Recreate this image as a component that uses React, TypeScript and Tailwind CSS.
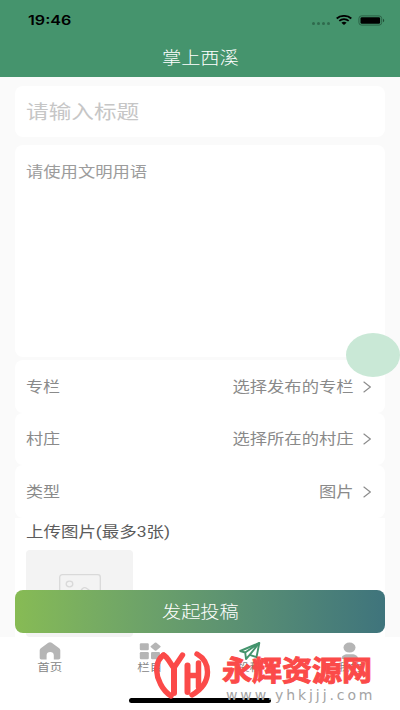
import type { ReactNode } from "react";

const cjk = "font-['Roboto','Noto_Sans_CJK_SC',sans-serif]";

const rows = [
  { label: "专栏", value: "选择发布的专栏" },
  { label: "村庄", value: "选择所在的村庄" },
  { label: "类型", value: "图片" }
];

function StatusBar() {
  return (
    <div className="flex h-10 items-center justify-between pl-7 pr-[15px] text-black">
      <span className="mt-px origin-left scale-x-[1.24] font-['Inter',sans-serif] text-[13px] font-semibold leading-none">19:46</span>
      <div className="flex items-center">
        <div className="mr-[6px] mt-[7px] flex gap-[2px]">
          {[0, 1, 2, 3].map((i) => (
            <i key={i} className="h-[2.5px] w-[3px] rounded-full bg-[#2f6a4d]" />
          ))}
        </div>
        <svg className="mr-[6px] h-[10px] w-4" viewBox="0 0 16 10" fill="none" stroke="black" strokeWidth="1.8">
          <path d="M.7 3.5C4.8 0 11.2 0 15.3 3.5" />
          <path d="M3.3 5.9C6 3.7 10 3.7 12.7 5.9" />
          <path d="M8 10 5.4 7.7C6.8 6.5 9.2 6.5 10.6 7.7Z" fill="black" stroke="none" />
        </svg>
        <svg className="h-[11px] w-[27px]" viewBox="0 0 27 11" fill="none">
          <rect x=".9" y=".9" width="22.8" height="9.2" rx="2.6" stroke="#2b6246" />
          <rect x="2.5" y="2.3" width="19.6" height="6.5" rx="1.3" fill="black" />
          <path d="M25 3.8c1.6.6 1.6 2.8 0 3.4z" fill="#1f4a34" />
        </svg>
      </div>
    </div>
  );
}

function Chevron() {
  return (
    <svg className="mt-px h-3 w-2" viewBox="0 0 8 12" fill="none" stroke="#8c8c8c" strokeWidth="1.1">
      <path d="M.6.8 7.3 6 .6 11.2" />
    </svg>
  );
}

function Tab({ label, children }: { label: string; children: ReactNode }) {
  return (
    <div className="flex w-[100px] flex-col items-center">
      <div className="flex h-[19px] items-center justify-center">{children}</div>
      <span className="mt-px scale-x-[1.17] text-[10.7px] leading-[13px] text-[#868686]">{label}</span>
    </div>
  );
}

function TabBar() {
  return (
    <nav className="flex h-[73px] bg-white pt-1">
      <Tab label="首页">
        <svg className="h-[18px] w-[22px]" viewBox="0 0 22 18" fill="#b5b5b5">
          <path d="M9.3.8c1-.8 2.4-.8 3.4 0l7.5 5.4c.7.5 1.1 1.2 1.1 2v7.6c0 1-.7 1.7-1.8 1.7h-4.7v-4.3c0-2-1.5-3.2-3.6-3.2s-3.6 1.2-3.6 3.2v4.3H2.4c-1 0-1.7-.7-1.7-1.7V8.2c0-.8.4-1.5 1.1-2z" />
        </svg>
      </Tab>
      <Tab label="栏目">
        <svg className="h-[18px] w-[22px]" viewBox="0 0 22 18" fill="#b5b5b5">
          <rect x=".8" y="1.3" width="9" height="7" rx="1.2" />
          <rect x=".8" y="10" width="9" height="7.2" rx="1.2" />
          <rect x="12" y="10" width="9" height="7.2" rx="1.2" />
          <path d="m15.8.7-3.9 3.2q-.8.7 0 1.4l3.9 3.2q.8.6 1.6 0l3.9-3.2q.8-.7 0-1.4L17.400.7q-.8-.6-1.6 0Z" />
        </svg>
      </Tab>
      <Tab label="投稿">
        <svg className="h-[18px] w-[22px]" viewBox="0 0 22 18" fill="none" stroke="#43946d" strokeWidth="1.9" strokeLinejoin="round">
          <path d="M20.300 1 1.200 9l5 1.500.8 6.500 3.700-4.200 6.800 2.400z" />
          <path d="M20.300 1 6.200 10.500M20.300 1l-9.600 11.800" />
        </svg>
      </Tab>
      <Tab label="我的">
        <svg className="h-[18px] w-[22px]" viewBox="0 0 22 18" fill="#b5b5b5">
          <ellipse cx="10.5" cy="5.6" rx="6" ry="5" />
          <path d="M2.500 17c0-3.200 2.700-4.700 6-4.700h4.500c3.300 0 6 1.500 6 4.700z" />
        </svg>
      </Tab>
    </nav>
  );
}

function Watermark() {
  return (
    <div className="absolute left-[154px] top-[649px] flex">
      <svg className="h-[51px] w-[58px]" viewBox="0 0 58 51" fill="none" stroke="#fb4a49" strokeWidth="5.4" strokeLinecap="round">
        <path d="M9.500 6C1 12 1 25 6.500 35c3 6 6 9 10.500 12" />
        <path d="M9.500 6c4 2 6 7 10.300 13L28.500 6" strokeLinejoin="round" />
        <path d="M20 19v25" strokeWidth="6" />
        <path d="M33.500 16.500V43" strokeWidth="6" />
        <path d="M44.500 14v24M34 26.500h10" strokeWidth="5.5" />
        <path d="M43 5c7 4 10.500 11 10.500 18 0 11-7 18-15.500 23" />
      </svg>
      <div className="ml-[10px] mt-[6px] flex flex-col">
        <span className="scale-y-[0.93] text-[30px] font-bold leading-[34px] text-[#fb4a49] [-webkit-text-stroke:1.1px_#fb4a49]">永辉资源网</span>
        <span className="ml-[4px] mt-[-2px] font-['DejaVu_Sans',sans-serif] text-[14px] font-normal leading-4 tracking-[2.9px] text-[#a4a4a4]">www.yhkjjj.com</span>
      </div>
    </div>
  );
}

export default function App() {
  return (
    <div className={`relative flex h-[710px] w-[400px] flex-col overflow-hidden bg-[#fafafa] font-normal ${cjk}`}>
      <header className="h-[77px] shrink-0 bg-[#45946d]">
        <StatusBar />
        <h1 className="flex h-9 items-center justify-center pt-[2px]">
          <span className="scale-x-[1.15] text-[16.7px] font-light text-white">掌上西溪</span>
        </h1>
      </header>

      <main className="flex h-[560px] shrink-0 flex-col overflow-hidden px-[15px] pt-[9px]">
        <div className="flex h-[51px] shrink-0 items-center rounded-lg bg-white px-[11px] pt-[2px]">
          <span className="origin-left scale-x-[1.18] text-[19.2px] leading-none text-[#c6c6c6]">请输入标题</span>
        </div>
        <div className="mt-2 h-[212px] shrink-0 rounded-lg bg-white px-[11px] pt-[18px]">
          <span className="block w-fit origin-left scale-x-[1.17] text-[14.8px] leading-[18px] text-[#9c9c9c]">请使用文明用语</span>
        </div>
        <div className="mt-[3px] shrink-0">
          {rows.map((row) => (
            <div key={row.label} className="flex h-[52.5px] items-center rounded-lg bg-white pl-[11px] pr-[14px] text-[14.8px] text-[#8a8a8a]">
              <span className="mt-px origin-left scale-x-[1.15]">{row.label}</span>
              <span className="ml-auto mr-[9px] mt-px origin-right scale-x-[1.17]">{row.value}</span>
              <Chevron />
            </div>
          ))}
        </div>
        <div className="flex-1 bg-white px-[11px] pt-1">
          <span className="block w-fit origin-left scale-x-[1.18] text-[14.8px] leading-[20px] text-[#5c5c5c]">上传图片(最多3张)</span>
          <div className="mt-[8px] flex h-[87px] w-[107px] justify-center rounded bg-[#f3f3f3] pt-6">
            <svg className="h-[34px] w-[42px]" viewBox="0 0 42 34" fill="none" stroke="#d9d9d9" strokeWidth="1.3">
              <rect x=".7" y=".7" width="40.6" height="32" rx="2.5" />
              <ellipse cx="10.5" cy="10" rx="3.3" ry="2.8" />
              <path d="m2 27 8-7 6 4 7.500-9.500q2.200-1.800 4.400 0L41 24" />
            </svg>
          </div>
        </div>
      </main>

      <TabBar />

      <button className="absolute left-[15px] top-[590px] flex h-[43px] w-[370px] items-center justify-center rounded-lg bg-linear-to-r from-[#87bb54] to-[#3f747c]">
        <span className="mt-[2px] scale-x-[1.15] text-[16.7px] font-light text-white">发起投稿</span>
      </button>
      <div className="absolute left-[346px] top-[333px] h-11 w-[54px] rounded-[50%] bg-[#c0e4cf]/85" />
      <div className="absolute left-[129px] top-[698px] h-[5px] w-[142px] rounded-full bg-black" />
      <Watermark />
    </div>
  );
}
